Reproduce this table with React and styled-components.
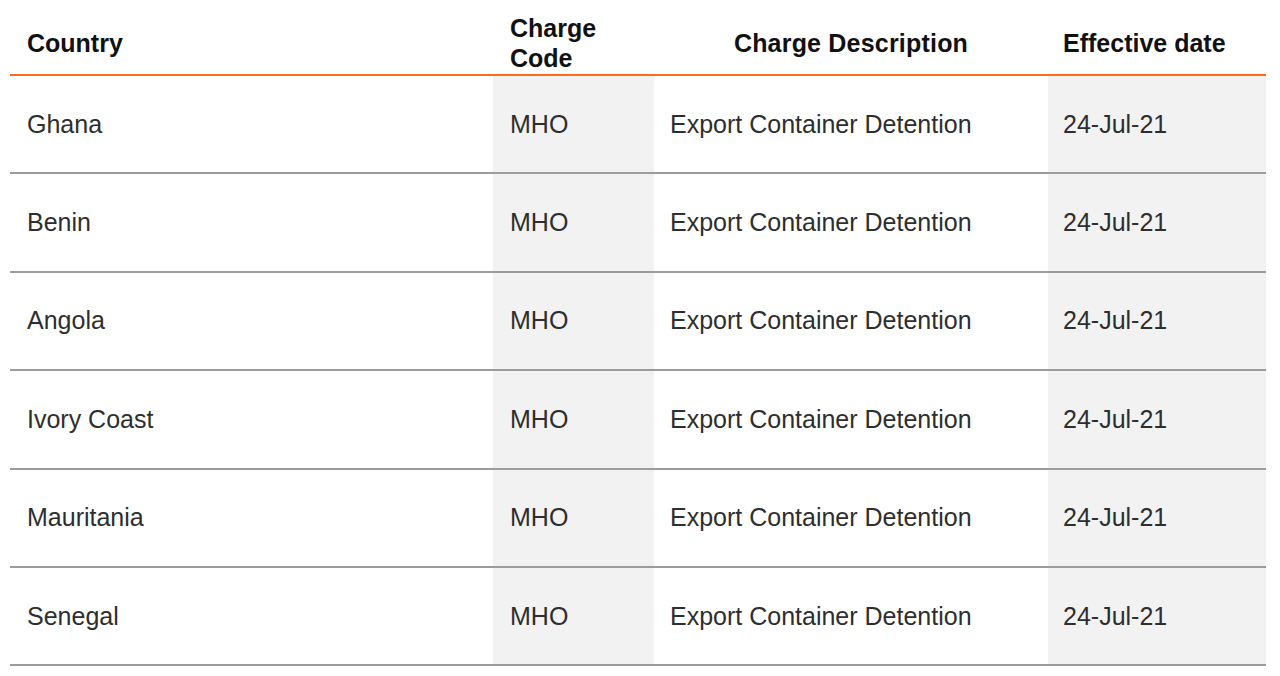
import React from "react";
import styled, { createGlobalStyle } from "styled-components";

const Global = createGlobalStyle`
  html, body { margin: 0; padding: 0; background: #ffffff; }
  body { font-family: "Liberation Sans", Arial, sans-serif; }
`;

const COLS = "483px 161px 394px 218px";

const Page = styled.div`
  padding: 0 14px 0 10px;
`;

const Table = styled.div`
  width: 1256px;
  display: flex;
  flex-direction: column;
`;

const HeaderRow = styled.div`
  display: grid;
  grid-template-columns: ${COLS};
  height: 76px;
  box-sizing: border-box;
  border-bottom: 2px solid #fd6a1c;
  box-shadow: 0 1px 0 rgba(253, 106, 28, 0.25);
`;

const HeadCell = styled.div`
  display: flex;
  align-items: center;
  justify-content: ${(p) => (p.$center ? "center" : "flex-start")};
  text-align: ${(p) => (p.$center ? "center" : "left")};
  padding: 12px 0 0 ${(p) => (p.$center ? "0" : p.$pad || "17px")};
  font-size: 25px;
  line-height: 30px;
  font-weight: 700;
  color: #111111;
  letter-spacing: ${(p) => (p.$center ? "0.2px" : "0")};
`;

const Row = styled.div`
  display: grid;
  grid-template-columns: ${COLS};
  height: 98.4px;
  box-sizing: border-box;
  border-bottom: 2px solid #9c9c9c;
  box-shadow: 0 1px 0 rgba(0, 0, 0, 0.12);
`;

const Cell = styled.div`
  display: flex;
  align-items: center;
  padding-left: ${(p) => p.$pad || "17px"};
  background: ${(p) => (p.$shaded ? "#f2f2f2" : "#ffffff")};
  font-size: 25px;
  color: #2e2e2e;
  white-space: nowrap;
`;

const rows = ["Ghana", "Benin", "Angola", "Ivory Coast", "Mauritania", "Senegal"];

export default function App() {
  return (
    <Page>
      <Global />
      <Table>
        <HeaderRow>
          <HeadCell $pad="17px">Country</HeadCell>
          <HeadCell $pad="17px">
            Charge
            <br />
            Code
          </HeadCell>
          <HeadCell $center>Charge Description</HeadCell>
          <HeadCell $pad="15px">Effective date</HeadCell>
        </HeaderRow>
        {rows.map((c) => (
          <Row key={c}>
            <Cell $pad="17px">{c}</Cell>
            <Cell $shaded $pad="17px">MHO</Cell>
            <Cell $pad="16px">Export Container Detention</Cell>
            <Cell $shaded $pad="15px">24-Jul-21</Cell>
          </Row>
        ))}
      </Table>
    </Page>
  );
}
